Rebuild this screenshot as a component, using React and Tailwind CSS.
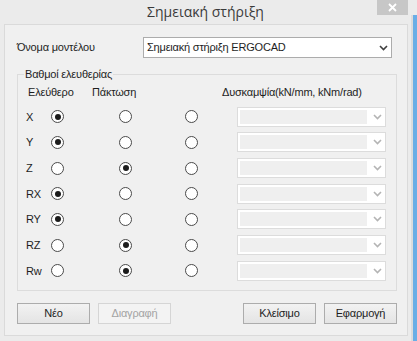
import React from 'react';

const rows = [
  { name: 'X', value: 0 },
  { name: 'Y', value: 0 },
  { name: 'Z', value: 1 },
  { name: 'RX', value: 0 },
  { name: 'RY', value: 0 },
  { name: 'RZ', value: 1 },
  { name: 'Rw', value: 1 },
];

function Radio({ checked }) {
  return (
    <span className="flex h-[13px] w-[13px] items-center justify-center rounded-full border border-[#4a4a4a] bg-white">
      {checked && <span className="h-[6px] w-[6px] rounded-full bg-[#1c1c1c]" />}
    </span>
  );
}

function Chevron({ color }) {
  return (
    <svg width="9" height="6" viewBox="0 0 9 6">
      <path d="M1 1 L4.5 4.5 L8 1" fill="none" stroke={color} strokeWidth="1.6" />
    </svg>
  );
}

function DisabledCombo() {
  return (
    <div className="flex h-[20px] w-[149px] border border-[#dcdcdc] bg-white">
      <div className="m-[2px] flex-1 bg-[#efefef]" />
      <div className="flex w-[16px] items-center justify-center">
        <Chevron color="#b4b4b4" />
      </div>
    </div>
  );
}

function Button({ children, disabled }) {
  return (
    <button
      className={
        disabled
          ? 'h-[21px] w-[73px] border border-[#d5d5d5] bg-[#f3f3f3] text-[#a3a3a3]'
          : 'h-[21px] w-[73px] border border-[#acacac] bg-gradient-to-b from-[#f2f2f2] to-[#e4e4e4] text-[#1e1e1e]'
      }
    >
      {children}
    </button>
  );
}

export default function App() {
  return (
    <div className="flex h-[341px] w-[417px] bg-[#ebebeb] font-['Liberation_Sans',sans-serif] text-[11px] tracking-[-0.2px] text-[#1e1e1e]">
      <div className="flex w-[411px] flex-col">
        <div className="grid h-[24px] grid-cols-[1fr_auto_1fr] items-start">
          <div />
          <div className="pt-[1px] font-['Open_Sans',sans-serif] text-[14px] leading-[22px] tracking-normal text-[#3a3a3a]">
            Σημειακή στήριξη
          </div>
          <div className="flex justify-end pr-[3px]">
            <div className="flex h-[15px] w-[31px] items-center justify-center bg-[#c7c7c7]">
              <svg width="9" height="9" viewBox="0 0 9 9">
                <path d="M1 1 L8 8 M8 1 L1 8" stroke="white" strokeWidth="1.8" />
              </svg>
            </div>
          </div>
        </div>
        <div className="ml-[4px] mr-[3px] flex flex-1 flex-col border border-[#dadada] bg-[#f0f0f0] px-[12px] pt-[12px]">
          <div className="flex h-[21px] items-center">
            <span className="w-[126px]">Όνομα μοντέλου</span>
            <div className="flex h-[21px] w-[249px] items-center border border-[#acacac] bg-white pl-[3px]">
              <span className="flex-1">Σημειακή στήριξη ERGOCAD</span>
              <span className="flex w-[16px] justify-center">
                <Chevron color="#404040" />
              </span>
            </div>
          </div>
          <fieldset className="mt-[9px] w-[380px] border border-[#dcdcdc] pb-[6px]">
            <legend className="ml-[6px] px-[1px] leading-[14px]">Βαθμοί ελευθερίας</legend>
            <div className="flex h-[23px] items-center pl-[10px]">
              <span className="w-[64px]">Ελεύθερο</span>
              <span className="w-[130px]">Πάκτωση</span>
              <span>Δυσκαμψία(kN/mm, kNm/rad)</span>
            </div>
            {rows.map((row) => (
              <div key={row.name} className="flex h-[25.67px] items-center pl-[8px]">
                <span className="w-[25px]">{row.name}</span>
                <Radio checked={row.value === 0} />
                <span className="ml-[55px]">
                  <Radio checked={row.value === 1} />
                </span>
                <span className="ml-[53px]">
                  <Radio checked={row.value === 2} />
                </span>
                <span className="ml-[39px]">
                  <DisabledCombo />
                </span>
              </div>
            ))}
          </fieldset>
          <div className="mt-[12px] flex w-[380px]">
            <Button>Νέο</Button>
            <span className="ml-[8px]">
              <Button disabled>Διαγραφή</Button>
            </span>
            <span className="ml-auto">
              <Button>Κλείσιμο</Button>
            </span>
            <span className="ml-[8px]">
              <Button>Εφαρμογή</Button>
            </span>
          </div>
        </div>
        <div className="h-[5px]" />
      </div>
      <div className="flex w-[6px] flex-col">
        <div className="h-[15px]" />
        <div className="flex flex-1">
          <div className="w-[2px] bg-[#dcdcdc]" />
          <div className="flex-1 bg-[#6aaee6]" />
        </div>
      </div>
    </div>
  );
}
